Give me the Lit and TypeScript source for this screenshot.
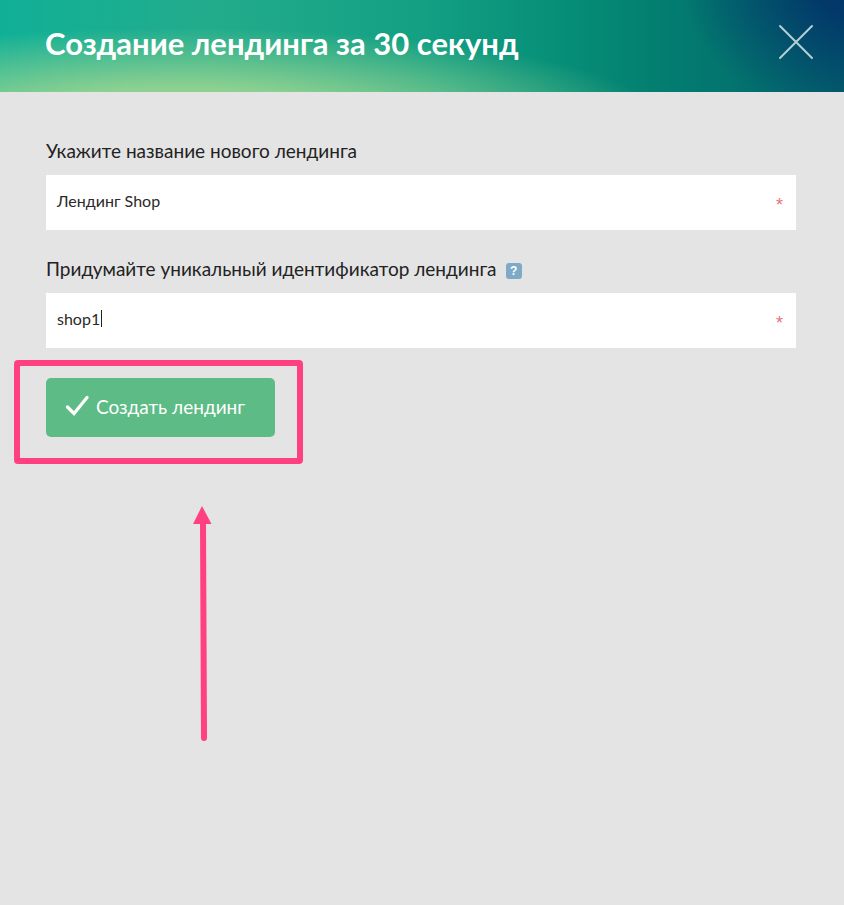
import { LitElement, html, css } from "lit";
import { customElement } from "lit/decorators.js";

@customElement("app-root")
export class AppRoot extends LitElement {
  static styles = css`
    :host {
      display: block;
      position: relative;
      width: 844px;
      height: 905px;
      overflow: hidden;
      background: #e4e4e4;
      font-family: Lato, "Noto Sans", sans-serif;
      color: #222;
    }
    .head {
      height: 92px;
      box-sizing: border-box;
      padding: 0 30px 0 45px;
      display: flex;
      align-items: center;
      justify-content: space-between;
      background:
        radial-gradient(ellipse 190px 150px at 870px -25px, #02316b 0%, rgba(2, 52, 106, 0.9) 30%, rgba(3, 80, 100, 0) 100%),
        radial-gradient(ellipse 480px 90px at 180px 118px, #a6d890 0%, rgba(150, 212, 145, 0.9) 35%, rgba(90, 185, 130, 0) 100%),
        linear-gradient(90deg, #10b097 0%, #22ac8c 25%, #13a083 50%, #078f78 66%, #037e70 78%, #03726e 88%, #03646c 100%);
    }
    h1 {
      margin: 0;
      font-size: 31px;
      line-height: 40px;
      font-weight: 700;
      color: #fff;
      position: relative;
      top: -3px;
    }
    .close {
      display: block;
      width: 36px;
      height: 36px;
      position: relative;
      top: -4px;
    }
    .body {
      padding: 48px 48px 0 46px;
      display: flex;
      flex-direction: column;
    }
    label {
      display: flex;
      align-items: center;
      font-size: 19px;
      line-height: 22px;
      height: 22px;
      margin-bottom: 13px;
      color: #222;
    }
    .help {
      display: inline-flex;
      align-items: center;
      justify-content: center;
      width: 16px;
      height: 16px;
      margin-left: 9px;
      border-radius: 3px;
      background: #7eaac8;
      color: #fff;
      font-size: 12px;
      font-weight: 900;
      font-family: "Liberation Sans", sans-serif;
      position: relative;
      top: 2px;
    }
    .field {
      height: 55px;
      box-sizing: border-box;
      background: #fff;
      display: flex;
      align-items: center;
      justify-content: space-between;
      padding: 0 13px 0 11px;
      font-size: 16px;
      color: #2a2a2a;
      margin-bottom: 28px;
    }
    .field.last {
      margin-bottom: 30px;
    }
    .value {
      display: flex;
      align-items: center;
      position: relative;
      top: -2px;
    }
    .caret {
      display: inline-block;
      width: 1px;
      height: 17px;
      background: #222;
      margin-left: 1px;
    }
    .star {
      color: #ee7078;
      font-size: 18px;
      line-height: 15px;
      position: relative;
      top: 3px;
      font-family: "Liberation Sans", sans-serif;
    }
    .btn {
      width: 229px;
      height: 59px;
      box-sizing: border-box;
      border-radius: 5px;
      background: #5dbb85;
      color: #fff;
      display: flex;
      align-items: center;
      padding: 0 0 0 19px;
      gap: 7px;
      font-size: 19px;
    }
    .btn span {
      position: relative;
      top: -1px;
    }
    .btn svg {
      display: block;
      position: relative;
      top: -2px;
    }
    .marks {
      position: absolute;
      left: 0;
      top: 0;
      pointer-events: none;
    }
  `;

  render() {
    return html`
      <header class="head">
        <h1>Создание лендинга за 30 секунд</h1>
        <svg class="close" viewBox="0 0 36 36" fill="none" stroke="#b4cfd3" stroke-width="2" stroke-linecap="round">
          <path d="M2 2 L34 34 M34 2 L2 34"></path>
        </svg>
      </header>
      <main class="body">
        <label>Укажите название нового лендинга</label>
        <div class="field">
          <span class="value">Лендинг Shop</span>
          <span class="star">*</span>
        </div>
        <label>Придумайте уникальный идентификатор лендинга<span class="help">?</span></label>
        <div class="field last">
          <span class="value">shop1<span class="caret"></span></span>
          <span class="star">*</span>
        </div>
        <div class="btn">
          <svg width="24" height="22" viewBox="0 0 24 22" fill="none" stroke="#fff" stroke-width="3.2" stroke-linecap="round" stroke-linejoin="miter">
            <path d="M2.500 12 L9 18.500 L22 2.500"></path>
          </svg>
          <span>Создать лендинг</span>
        </div>
      </main>
      <svg class="marks" width="844" height="905" viewBox="0 0 844 905" fill="none">
        <rect x="17" y="363" width="283" height="98" rx="1" stroke="#ff4081" stroke-width="6"></rect>
        <path d="M204 738 L203 522" stroke="#ff4081" stroke-width="6" stroke-linecap="round"></path>
        <path d="M202 506 L211.500 524 L193 524 Z" fill="#ff4081"></path>
      </svg>
    `;
  }
}
